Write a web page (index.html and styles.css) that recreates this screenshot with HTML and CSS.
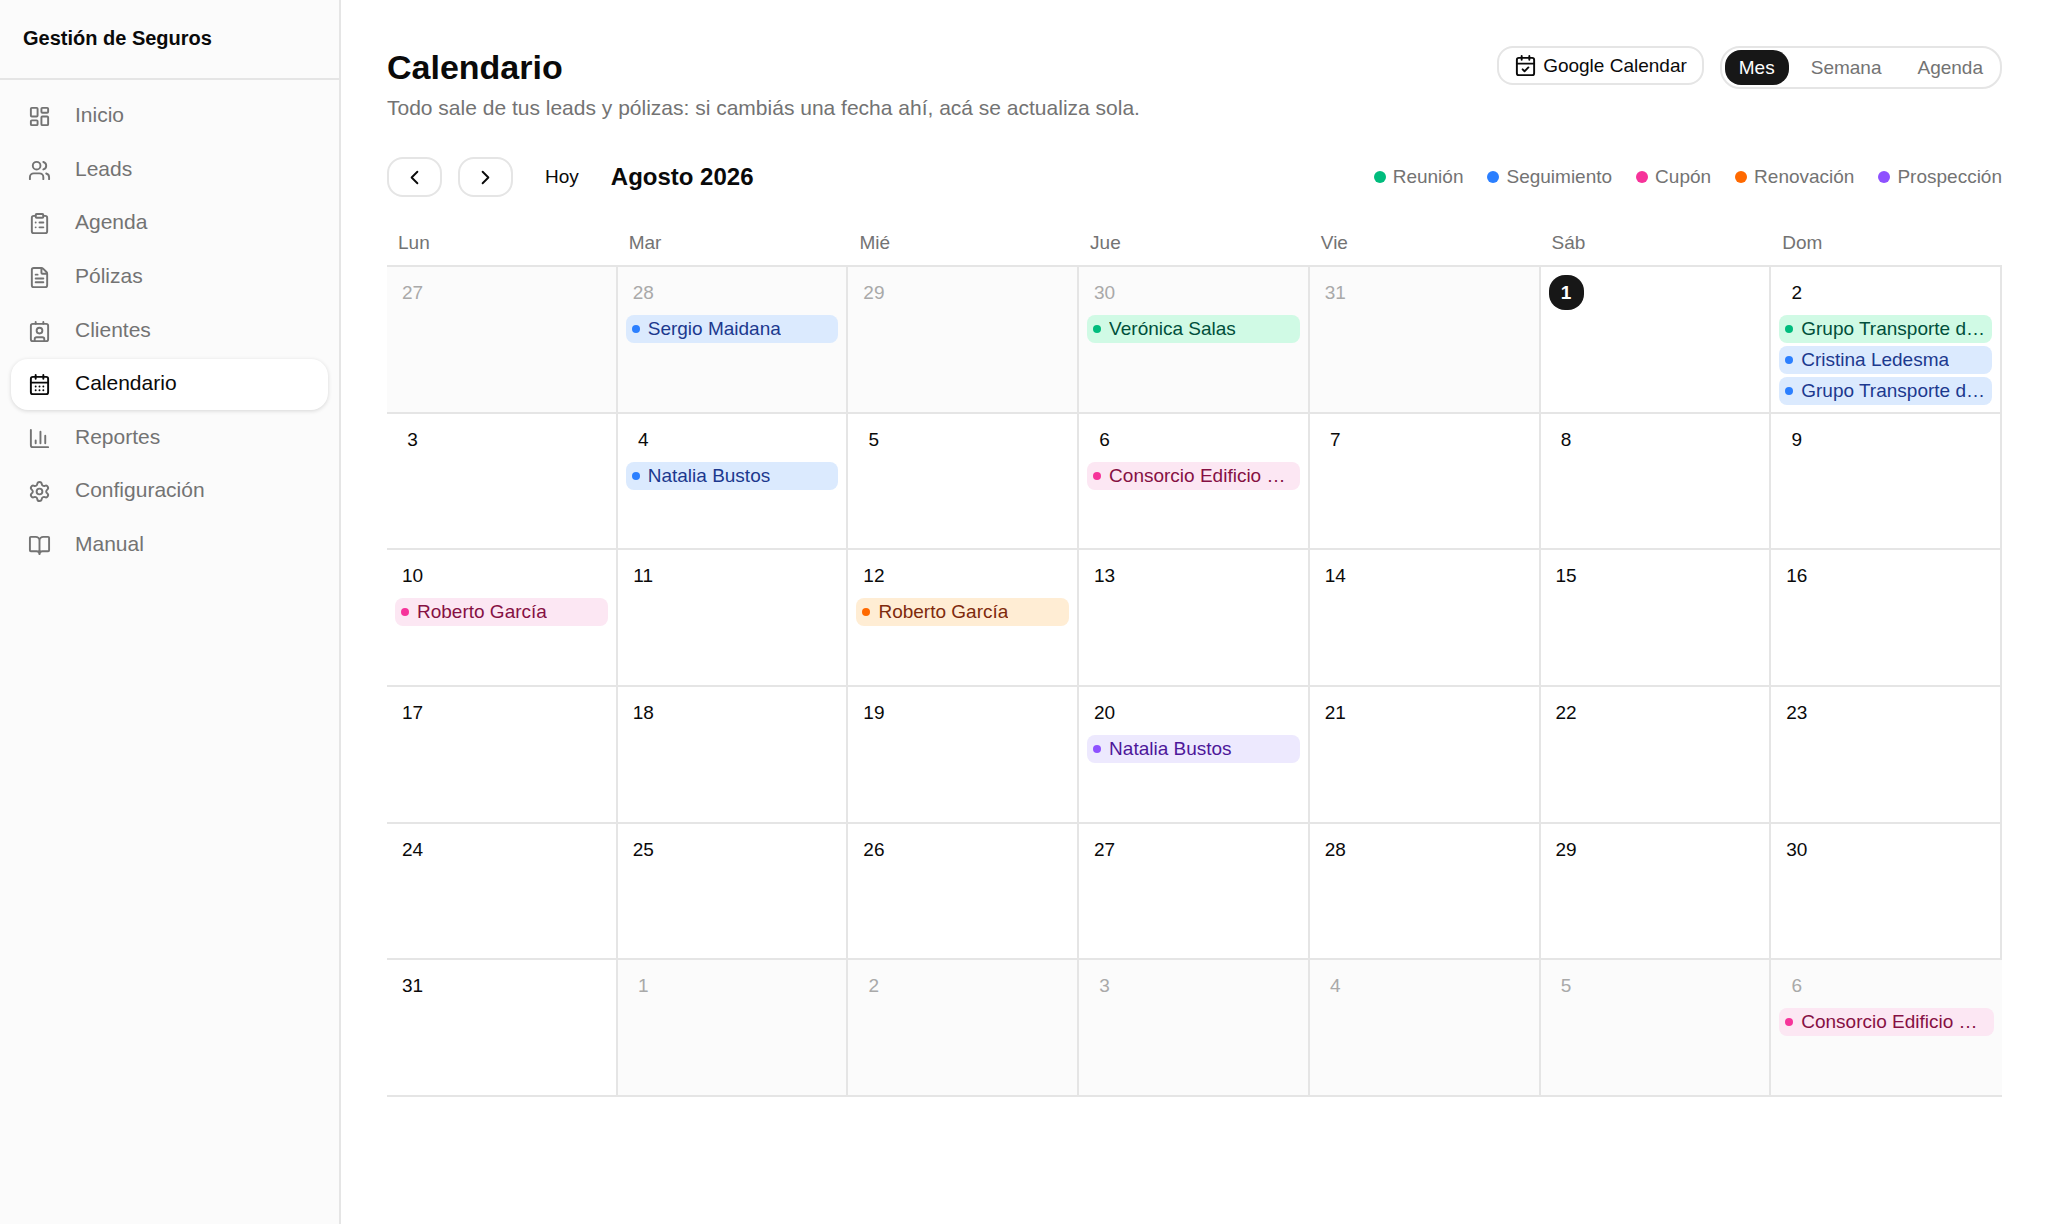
FILE: index.html
```html
<!DOCTYPE html>
<html lang="es">
  <head>
    <meta charset="UTF-8" />
    <meta name="viewport" content="width=device-width, initial-scale=1.0" />
    <title>Calendario</title>
    <link rel="stylesheet" href="styles.css">
  </head>
  <body>
    <aside class="sidebar">
      <div class="brand">Gestión de Seguros</div>
      <nav class="menu">
        <a href="#">
          <svg class="icon" viewBox="0 0 24 24"><rect x="3" y="3" width="7" height="9" rx="1" /><rect x="14" y="3" width="7" height="5" rx="1" /><rect x="14" y="12" width="7" height="9" rx="1" /><rect x="3" y="16" width="7" height="5" rx="1" /></svg>
          <span>Inicio</span>
        </a>
        <a href="#">
          <svg class="icon" viewBox="0 0 24 24"><circle cx="9" cy="7" r="4" /><path d="M16 21v-2a4 4 0 0 0-4-4H6a4 4 0 0 0-4 4v2M16 3.128a4 4 0 0 1 0 7.744M22 21v-2a4 4 0 0 0-3-3.87" /></svg>
          <span>Leads</span>
        </a>
        <a href="#">
          <svg class="icon" viewBox="0 0 24 24"><rect x="8" y="2" width="8" height="4" rx="1" /><path d="M16 4h2a2 2 0 0 1 2 2v14a2 2 0 0 1-2 2H6a2 2 0 0 1-2-2V6a2 2 0 0 1 2-2h2M12 11h4M12 16h4M8 11h.01M8 16h.01" /></svg>
          <span>Agenda</span>
        </a>
        <a href="#">
          <svg class="icon" viewBox="0 0 24 24"><path d="M6 22a2 2 0 0 1-2-2V4a2 2 0 0 1 2-2h8a2.400 2.400 0 0 1 1.704.706l3.588 3.588A2.400 2.400 0 0 1 20 8v12a2 2 0 0 1-2 2zM14 2v5a1 1 0 0 0 1 1h5M10 9H8M16 13H8M16 17H8" /></svg>
          <span>Pólizas</span>
        </a>
        <a href="#">
          <svg class="icon" viewBox="0 0 24 24"><rect x="3" y="4" width="18" height="18" rx="2" /><circle cx="12" cy="11" r="3" /><path d="M8 2v2M16 2v2M7 22v-2a2 2 0 0 1 2-2h6a2 2 0 0 1 2 2v2" /></svg>
          <span>Clientes</span>
        </a>
        <a href="#" class="active">
          <svg class="icon" viewBox="0 0 24 24"><rect x="3" y="4" width="18" height="18" rx="2" /><path d="M8 2v4M16 2v4M3 10h18M8 14h.01M12 14h.01M16 14h.01M8 18h.01M12 18h.01M16 18h.01" /></svg>
          <span>Calendario</span>
        </a>
        <a href="#">
          <svg class="icon" viewBox="0 0 24 24"><path d="M3 3v16a2 2 0 0 0 2 2h16M18 17V9M13 17V5M8 17v-3" /></svg>
          <span>Reportes</span>
        </a>
        <a href="#">
          <svg class="icon" viewBox="0 0 24 24"><path d="M9.671 4.136a2.34 2.34 0 0 1 4.659 0 2.34 2.34 0 0 0 3.319 1.915 2.34 2.34 0 0 1 2.33 4.033 2.34 2.34 0 0 0 0 3.831 2.34 2.34 0 0 1-2.33 4.033 2.34 2.34 0 0 0-3.319 1.915 2.34 2.34 0 0 1-4.659 0 2.34 2.34 0 0 0-3.32-1.915 2.34 2.34 0 0 1-2.33-4.033 2.34 2.34 0 0 0 0-3.831A2.34 2.34 0 0 1 6.35 6.051a2.34 2.34 0 0 0 3.319-1.915" /><circle cx="12" cy="12" r="3" /></svg>
          <span>Configuración</span>
        </a>
        <a href="#">
          <svg class="icon" viewBox="0 0 24 24"><path d="M12 7v14M3 18a1 1 0 0 1-1-1V4a1 1 0 0 1 1-1h5a4 4 0 0 1 4 4 4 4 0 0 1 4-4h5a1 1 0 0 1 1 1v13a1 1 0 0 1-1 1h-6a3 3 0 0 0-3 3 3 3 0 0 0-3-3z" /></svg>
          <span>Manual</span>
        </a>
      </nav>
    </aside>

    <main class="content">
      <header class="page-header">
        <div>
          <h1>Calendario</h1>
          <p>Todo sale de tus leads y pólizas: si cambiás una fecha ahí, acá se actualiza sola.</p>
        </div>
        <div class="actions">
          <button class="btn google">
            <svg class="icon" viewBox="0 0 24 24"><rect x="3" y="4" width="18" height="18" rx="2" /><path d="M8 2v4M16 2v4M3 10h18M9 16l2 2 4-4" /></svg>
            Google Calendar
          </button>
          <div class="views">
            <button class="selected">Mes</button>
            <button>Semana</button>
            <button>Agenda</button>
          </div>
        </div>
      </header>

      <div class="toolbar">
        <button class="btn arrow" aria-label="Mes anterior">
          <svg class="icon" viewBox="0 0 24 24"><path d="M15 6l-6 6 6 6" /></svg>
        </button>
        <button class="btn arrow" aria-label="Mes siguiente">
          <svg class="icon" viewBox="0 0 24 24"><path d="M9 6l6 6-6 6" /></svg>
        </button>
        <button class="today-btn">Hoy</button>
        <h2>Agosto 2026</h2>
        <ul class="legend">
          <li class="green">Reunión</li>
          <li class="blue">Seguimiento</li>
          <li class="pink">Cupón</li>
          <li class="orange">Renovación</li>
          <li class="violet">Prospección</li>
        </ul>
      </div>

      <table class="calendar">
        <thead>
          <tr>
            <th>Lun</th>
            <th>Mar</th>
            <th>Mié</th>
            <th>Jue</th>
            <th>Vie</th>
            <th>Sáb</th>
            <th>Dom</th>
          </tr>
        </thead>
        <tbody>
          <tr>
            <td class="out"><span class="day">27</span></td>
            <td class="out">
              <span class="day">28</span>
              <a href="#" class="event blue"><span>Sergio Maidana</span></a>
            </td>
            <td class="out"><span class="day">29</span></td>
            <td class="out">
              <span class="day">30</span>
              <a href="#" class="event green"><span>Verónica Salas</span></a>
            </td>
            <td class="out"><span class="day">31</span></td>
            <td><span class="day today">1</span></td>
            <td>
              <span class="day">2</span>
              <a href="#" class="event green"><span>Grupo Transporte del Sur</span></a>
              <a href="#" class="event blue"><span>Cristina Ledesma</span></a>
              <a href="#" class="event blue"><span>Grupo Transporte del Sur</span></a>
            </td>
          </tr>
          <tr>
            <td><span class="day">3</span></td>
            <td>
              <span class="day">4</span>
              <a href="#" class="event blue"><span>Natalia Bustos</span></a>
            </td>
            <td><span class="day">5</span></td>
            <td>
              <span class="day">6</span>
              <a href="#" class="event pink"><span>Consorcio Edificio Mitre</span></a>
            </td>
            <td><span class="day">7</span></td>
            <td><span class="day">8</span></td>
            <td><span class="day">9</span></td>
          </tr>
          <tr>
            <td>
              <span class="day">10</span>
              <a href="#" class="event pink"><span>Roberto García</span></a>
            </td>
            <td><span class="day">11</span></td>
            <td>
              <span class="day">12</span>
              <a href="#" class="event orange"><span>Roberto García</span></a>
            </td>
            <td><span class="day">13</span></td>
            <td><span class="day">14</span></td>
            <td><span class="day">15</span></td>
            <td><span class="day">16</span></td>
          </tr>
          <tr>
            <td><span class="day">17</span></td>
            <td><span class="day">18</span></td>
            <td><span class="day">19</span></td>
            <td>
              <span class="day">20</span>
              <a href="#" class="event violet"><span>Natalia Bustos</span></a>
            </td>
            <td><span class="day">21</span></td>
            <td><span class="day">22</span></td>
            <td><span class="day">23</span></td>
          </tr>
          <tr>
            <td><span class="day">24</span></td>
            <td><span class="day">25</span></td>
            <td><span class="day">26</span></td>
            <td><span class="day">27</span></td>
            <td><span class="day">28</span></td>
            <td><span class="day">29</span></td>
            <td><span class="day">30</span></td>
          </tr>
          <tr>
            <td><span class="day">31</span></td>
            <td class="out"><span class="day">1</span></td>
            <td class="out"><span class="day">2</span></td>
            <td class="out"><span class="day">3</span></td>
            <td class="out"><span class="day">4</span></td>
            <td class="out"><span class="day">5</span></td>
            <td class="out">
              <span class="day">6</span>
              <a href="#" class="event pink"><span>Consorcio Edificio Mitre</span></a>
            </td>
          </tr>
        </tbody>
      </table>
    </main>
  </body>
</html>
```
FILE: styles.css
```css
* {
  box-sizing: border-box;
  margin: 0;
  padding: 0;
}
body {
  display: flex;
  min-height: 100vh;
  background-color: #fff;
  color: #0a0a0a;
  font-family: "Liberation Sans", Arial, sans-serif;
  font-size: 19px;
  line-height: 28px;
}
a {
  color: inherit;
  text-decoration: none;
}
button {
  border: none;
  background: none;
  color: inherit;
  font: inherit;
  cursor: pointer;
}
.icon {
  width: 23px;
  height: 23px;
  flex-shrink: 0;
  fill: none;
  stroke: currentColor;
  stroke-width: 2;
  stroke-linecap: round;
  stroke-linejoin: round;
}

/* sidebar */
.sidebar {
  width: 341px;
  flex-shrink: 0;
  background-color: #fbfbfb;
  border-right: 2px solid #e5e5e5;
}
.brand {
  padding: 24px 23px 26px;
  border-bottom: 2px solid #e5e5e5;
  font-size: 20px;
  font-weight: bold;
}
.menu {
  display: flex;
  flex-direction: column;
  justify-content: space-between;
  height: 502px;
  padding: 11px;
}
.menu a {
  display: flex;
  align-items: center;
  gap: 24px;
  height: 51px;
  padding: 0 17px;
  border-radius: 17px;
  color: #737373;
  font-size: 21px;
}
.menu span {
  padding-bottom: 3px;
}
.menu .active {
  background-color: #fff;
  color: #0a0a0a;
  box-shadow: 0 1px 4px rgba(0, 0, 0, 0.15);
}

/* page header */
.content {
  flex: 1;
  min-width: 0;
  padding: 46px;
}
.page-header {
  display: flex;
  justify-content: space-between;
  align-items: flex-start;
}
h1 {
  font-size: 34px;
  line-height: 42px;
}
.page-header p {
  margin-top: 6px;
  color: #737373;
  font-size: 21px;
}
.actions {
  display: flex;
  align-items: flex-start;
  gap: 16px;
}
.btn {
  display: flex;
  align-items: center;
  justify-content: center;
  border: 2px solid #e5e5e5;
  border-radius: 16px;
}
.google {
  gap: 6px;
  height: 39px;
  padding: 0 15px;
}
.views {
  display: flex;
  gap: 8px;
  padding: 2px 3px;
  border: 2px solid #e5e5e5;
  border-radius: 20px;
}
.views button {
  height: 35px;
  padding: 0 14px;
  border-radius: 16px;
  color: #737373;
}
.views .selected {
  background-color: #171717;
  color: #fff;
}

/* month navigation and legend */
.toolbar {
  display: flex;
  align-items: center;
  gap: 16px;
  margin-top: 35px;
}
.arrow {
  width: 55px;
  height: 40px;
}
.today-btn {
  height: 40px;
  padding: 0 16px;
}
h2 {
  font-size: 24px;
}
.legend {
  display: flex;
  gap: 24px;
  margin-left: auto;
  list-style: none;
  color: #737373;
}
.legend li {
  display: flex;
  align-items: center;
  gap: 7px;
}
.legend li::before {
  content: "";
  width: 12px;
  height: 12px;
  border-radius: 50%;
  background-color: var(--dot);
}

/* month grid */
.calendar {
  width: 100%;
  height: 877px;
  margin-top: 23px;
  border-spacing: 0;
  table-layout: fixed;
}
th {
  height: 47px;
  padding: 0 11px;
  border-bottom: 2px solid #e5e5e5;
  color: #737373;
  font-weight: normal;
  text-align: left;
}
td {
  height: 136px;
  padding: 8px 8px 6px;
  border-right: 2px solid #e5e5e5;
  border-bottom: 2px solid #e5e5e5;
  vertical-align: top;
}
tr:last-child td:last-child {
  border-right: none;
}
.out {
  background-color: #fbfbfb;
}
.day {
  display: block;
  width: 35px;
  margin-bottom: 5px;
  border-radius: 16px;
  line-height: 35px;
  text-align: center;
}
.out .day {
  color: #a9a9a9;
}
.today {
  background-color: #171717;
  color: #fff;
  font-weight: bold;
}
.event {
  display: flex;
  align-items: center;
  gap: 8px;
  height: 28px;
  padding: 0 6px;
  border-radius: 8px;
}
.event + .event {
  margin-top: 3px;
}
.event::before {
  content: "";
  width: 8px;
  height: 8px;
  flex-shrink: 0;
  border-radius: 50%;
  background-color: var(--dot);
}
.event span {
  overflow: hidden;
  text-overflow: ellipsis;
  white-space: nowrap;
}

/* event types */
.green {
  --dot: #00bc7d;
}
.blue {
  --dot: #2b7fff;
}
.pink {
  --dot: #f6339a;
}
.orange {
  --dot: #ff6900;
}
.violet {
  --dot: #8e51ff;
}
.event.green {
  background-color: #d0fae5;
  color: #004f3b;
}
.event.blue {
  background-color: #dbeafe;
  color: #1c398e;
}
.event.pink {
  background-color: #fce7f3;
  color: #861043;
}
.event.orange {
  background-color: #ffedd4;
  color: #7e2a0c;
}
.event.violet {
  background-color: #ede9fe;
  color: #4d179a;
}
```
